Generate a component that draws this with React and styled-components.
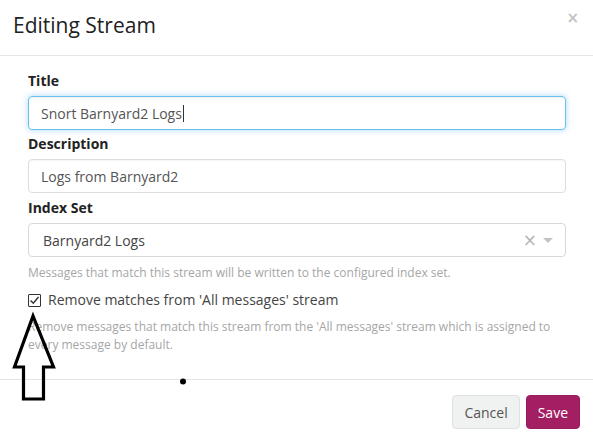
import React from "react";
import styled, { createGlobalStyle } from "styled-components";

const Global = createGlobalStyle`
  html, body { margin: 0; padding: 0; background: #fff; }
  body { font-family: "Open Sans", "Noto Sans", sans-serif; color: #333; }
  * { box-sizing: border-box; }
`;

const Modal = styled.div`
  position: relative;
  width: 593px;
  height: 444px;
  background: #fff;
  overflow: hidden;
`;

const Header = styled.div`
  height: 56px;
  border-bottom: 1px solid #e5e5e5;
  display: flex;
  align-items: center;
  justify-content: space-between;
  padding: 0 14px 5px 13px;
`;

const Title = styled.h2`
  margin: 0;
  font-size: 21px;
  font-weight: 400;
  color: #222;
`;

const Close = styled.button`
  border: none;
  background: none;
  padding: 0;
  font-family: "DejaVu Sans", sans-serif;
  font-size: 15px;
  font-weight: bold;
  color: #c4c4c4;
  align-self: flex-start;
  margin-top: 9px;
  line-height: 18px;
`;

const Body = styled.div`
  padding: 15px 27px 0 28px;
  height: 324px;
  border-bottom: 1px solid #e5e5e5;
  display: flex;
  flex-direction: column;
`;

const Label = styled.label`
  font-size: 14px;
  font-weight: 700;
  color: #222;
  line-height: 20px;
  margin-top: ${(p) => p.$mt || 0}px;
  margin-bottom: 5px;
`;

const Input = styled.div`
  height: 34px;
  border-radius: 4px;
  border: 1px solid ${(p) => (p.$focus ? "#66c2ea" : "#dcdfe2")};
  box-shadow: ${(p) =>
    p.$focus
      ? "inset 0 1px 1px rgba(0,0,0,.05), 0 0 6px rgba(102,185,233,.55)"
      : "inset 0 1px 1px rgba(0,0,0,.04)"};
  padding: 0 12px;
  display: flex;
  align-items: center;
  font-size: 14px;
  color: #555;
`;

const Caret = styled.span`
  display: inline-block;
  width: 1px;
  height: 17px;
  background: #333;
  margin-left: 1px;
`;

const Select = styled.div`
  height: 34px;
  border-radius: 4px;
  border: 1px solid #d6d9dc;
  padding: 0 12px 0 14px;
  display: flex;
  align-items: center;
  font-size: 14px;
  color: #444;
`;

const SelectValue = styled.span`
  flex: 1;
`;

const ClearX = styled.span`
  font-family: "DejaVu Sans", sans-serif;
  font-size: 17px;
  color: #b5b5b5;
  margin-right: 6px;
  line-height: 1;
`;

const Arrow = styled.span`
  width: 0;
  height: 0;
  border-left: 5px solid transparent;
  border-right: 5px solid transparent;
  border-top: 5px solid #c3c3c3;
`;

const Help = styled.div`
  font-size: 12px;
  line-height: 18px;
  color: #a6a6a6;
  margin-top: ${(p) => p.$mt || 0}px;
`;

const CheckRow = styled.label`
  display: flex;
  align-items: center;
  margin-top: 8px;
  font-size: 14px;
  color: #444;
  line-height: 20px;
`;

const Box = styled.span`
  width: 13px;
  height: 13px;
  border: 1px solid #333;
  border-radius: 1px;
  display: inline-flex;
  align-items: center;
  justify-content: center;
  margin-right: 7px;
`;

const Footer = styled.div`
  display: flex;
  justify-content: flex-end;
  gap: 6px;
  padding: 15px 13px 0 0;
`;

const Button = styled.button`
  height: 34px;
  border-radius: 4px;
  font-family: "Open Sans", sans-serif;
  font-size: 14px;
  padding: 0 ${(p) => (p.$primary ? 11 : 11)}px;
  border: 1px solid ${(p) => (p.$primary ? "#961c5d" : "#dfe1e1")};
  background: ${(p) => (p.$primary ? "#a41e63" : "#f0f1f1")};
  color: ${(p) => (p.$primary ? "#fff" : "#555")};
`;

const Annotation = styled.svg`
  position: absolute;
  left: 0;
  top: 0;
  pointer-events: none;
`;

export default function App() {
  return (
    <>
      <Global />
      <Modal>
        <Header>
          <Title>Editing Stream</Title>
          <Close aria-label="close">×</Close>
        </Header>
        <Body>
          <Label>Title</Label>
          <Input $focus>
            Snort Barnyard2 Logs
            <Caret />
          </Input>
          <Label $mt={4}>Description</Label>
          <Input>Logs from Barnyard2</Input>
          <Label $mt={5}>Index Set</Label>
          <Select>
            <SelectValue>Barnyard2 Logs</SelectValue>
            <ClearX>×</ClearX>
            <Arrow />
          </Select>
          <Help $mt={7}>
            Messages that match this stream will be written to the configured index set.
          </Help>
          <CheckRow>
            <Box>
              <svg width="11" height="11" viewBox="0 0 11 11">
                <path d="M1.5 5.5 L4.3 8.3 L9.5 2" fill="none" stroke="#333" strokeWidth="1.4" />
              </svg>
            </Box>
            Remove matches from 'All messages' stream
          </CheckRow>
          <Help $mt={8}>
            Remove messages that match this stream from the 'All messages' stream which is assigned to
            <br />
            every message by default.
          </Help>
        </Body>
        <Footer>
          <Button>Cancel</Button>
          <Button $primary>Save</Button>
        </Footer>
        <Annotation width="593" height="444" viewBox="0 0 593 444">
          <path
            d="M33 316 L14.5 367 L23.5 367 L23.5 399 L43.5 399 L43.5 367 L53.5 367 Z"
            fill="none"
            stroke="#000"
            strokeWidth="3.2"
            strokeLinejoin="miter"
          />
          <circle cx="183" cy="381.5" r="3" fill="#000" />
        </Annotation>
      </Modal>
    </>
  );
}
